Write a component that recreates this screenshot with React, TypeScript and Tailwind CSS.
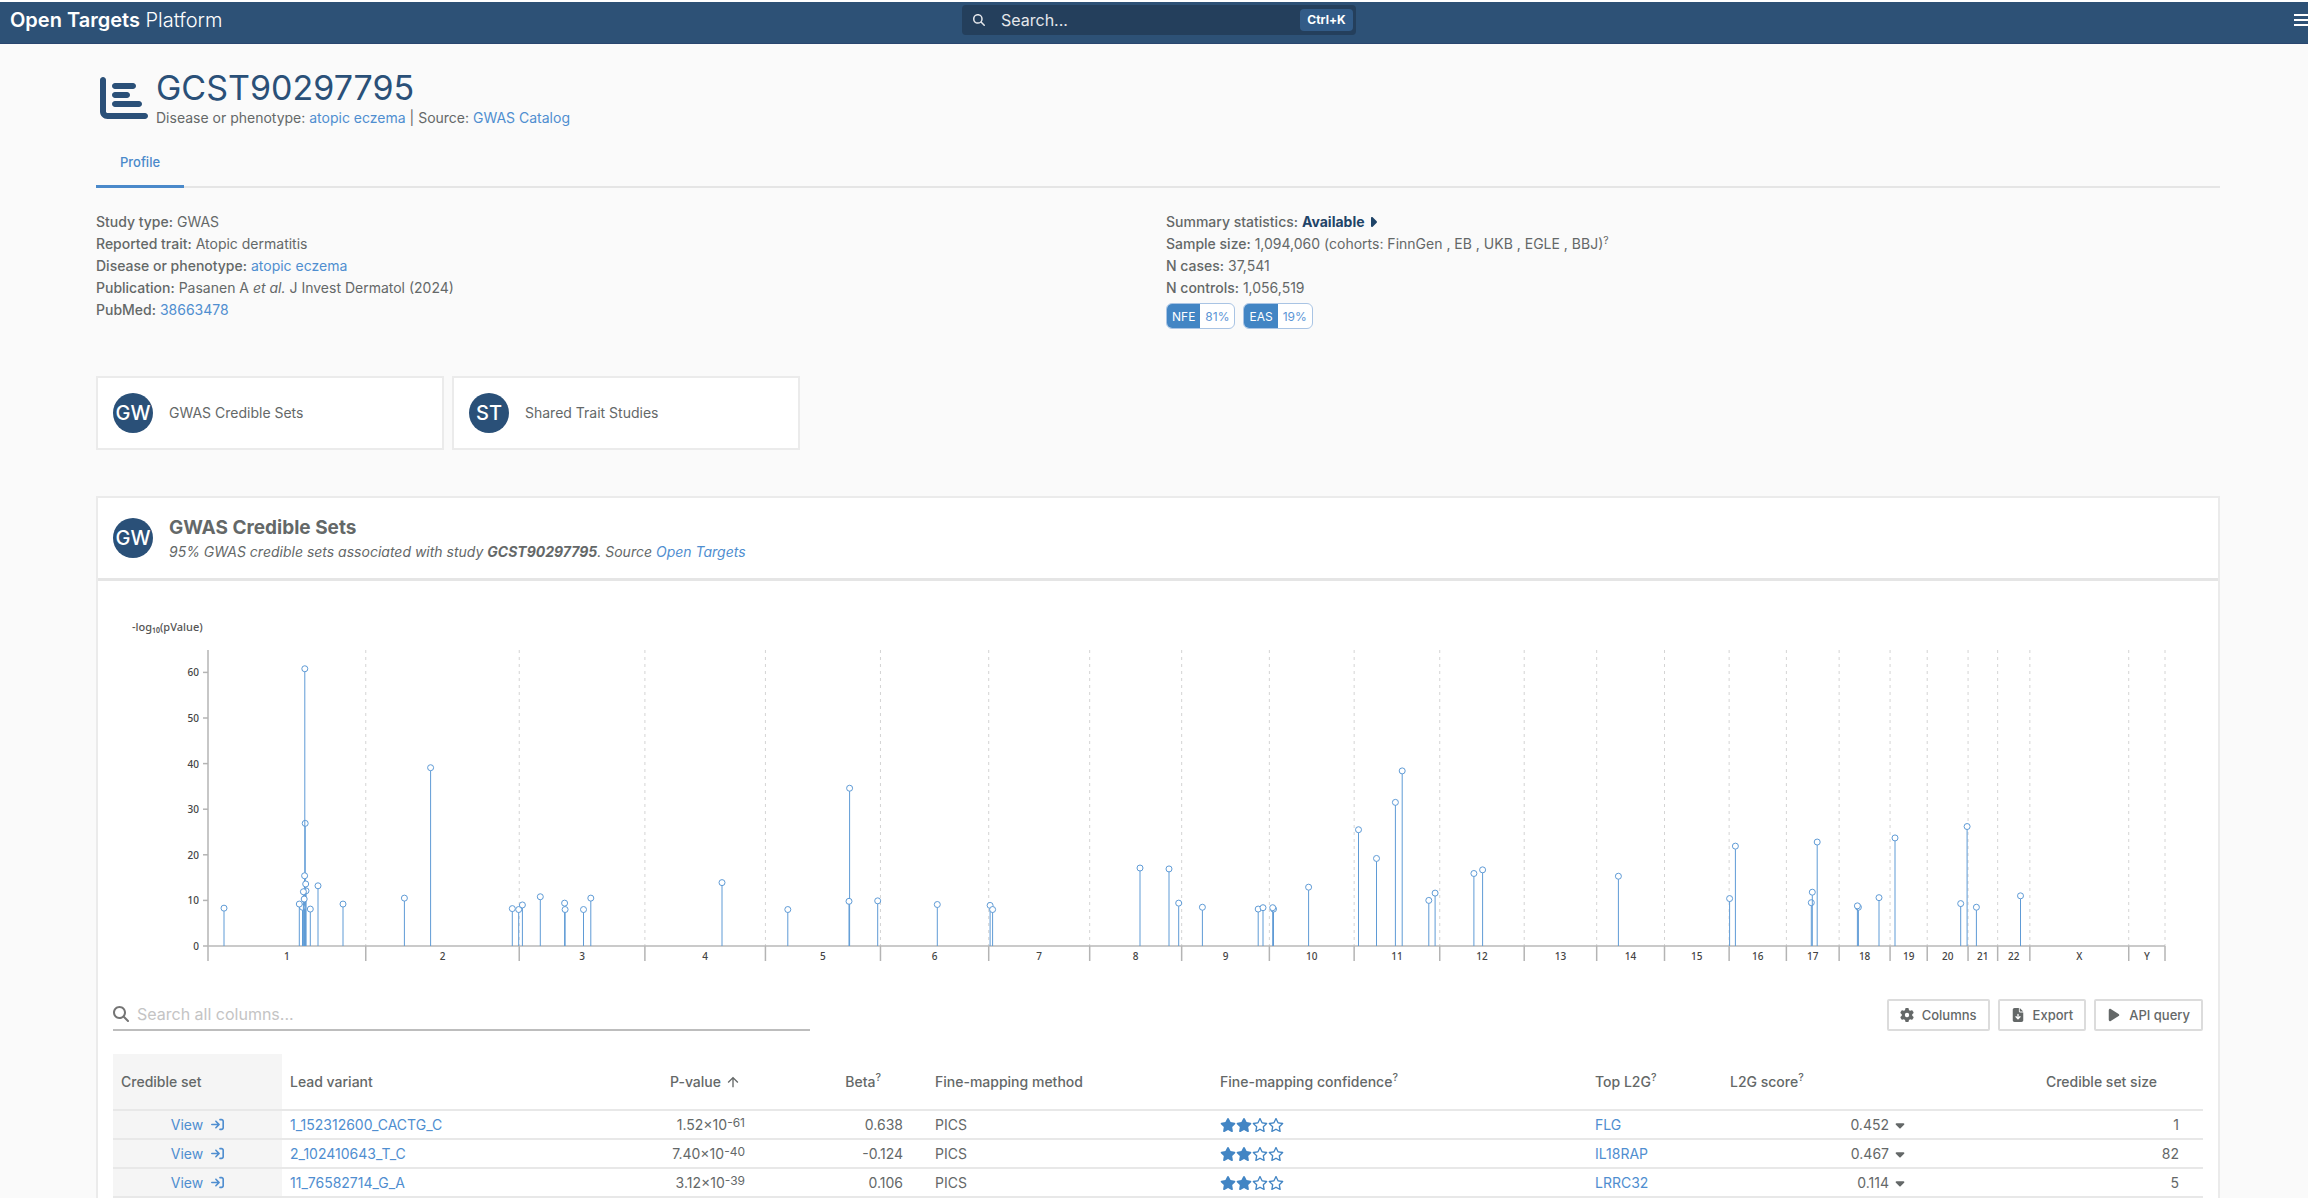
import { ReactNode } from 'react';
import {
  FaArrowRightToBracket,
  FaCaretDown,
  FaCaretRight,
  FaChartBar,
  FaFileArrowDown,
  FaGear,
  FaMagnifyingGlass,
  FaPlay,
  FaRegStar,
  FaStar,
} from 'react-icons/fa6';
import { MdArrowUpward, MdMenu } from 'react-icons/md';

interface CredibleSet {
  variant: string;
  mantissa: string;
  exponent: string;
  beta: string;
  gene: string;
  score: string;
  size: number;
}

const credibleSets: CredibleSet[] = [
  { variant: '1_152312600_CACTG_C', mantissa: '1.52', exponent: '-61', beta: '0.638', gene: 'FLG', score: '0.452', size: 1 },
  { variant: '2_102410643_T_C', mantissa: '7.40', exponent: '-40', beta: '-0.124', gene: 'IL18RAP', score: '0.467', size: 82 },
  { variant: '11_76582714_G_A', mantissa: '3.12', exponent: '-39', beta: '0.106', gene: 'LRRC32', score: '0.114', size: 5 },
];

// chromosome name and length in megabases
const chromosomes: [string, number][] = [
  ['1', 248.96], ['2', 242.19], ['3', 198.3], ['4', 190.21], ['5', 181.54], ['6', 170.81],
  ['7', 159.35], ['8', 145.14], ['9', 138.39], ['10', 133.8], ['11', 135.09], ['12', 133.28],
  ['13', 114.36], ['14', 107.04], ['15', 101.99], ['16', 90.34], ['17', 83.26], ['18', 80.37],
  ['19', 58.62], ['20', 64.44], ['21', 46.71], ['22', 50.82], ['X', 156.04], ['Y', 57.23],
];

// distance along the genome axis, -log10(pValue)
const points: [number, number][] = [
  [16, 8.3], [97.2, 26.9], [96.8, 60.8], [96.6, 15.4], [98, 12.1], [97.7, 13.6], [94.5, 8.5],
  [95.4, 11.9], [96.2, 10.3], [91.3, 9.2], [102.3, 8.1], [110, 13.2], [135, 9.2], [196.4, 10.5],
  [222.6, 39.1], [304.3, 8.2], [310.7, 8], [314.4, 9], [332.3, 10.8], [356.6, 9.4], [357.1, 8],
  [375.5, 8], [382.8, 10.5], [514, 13.9], [579.8, 8], [641.6, 34.6], [641, 9.8], [669.7, 9.9],
  [729.3, 9.1], [782.1, 8.9], [784.6, 8], [932, 17.1], [961, 16.9], [970.7, 9.4], [994.4, 8.5],
  [1050.2, 8.1], [1055, 8.4], [1065.5, 8.1], [1064.7, 8.4], [1100.6, 12.9], [1150.5, 25.5],
  [1168.5, 19.2], [1187.4, 31.5], [1194.2, 38.4], [1220.8, 10], [1227.1, 11.6], [1265.9, 15.9],
  [1274.6, 16.7], [1410.4, 15.3], [1521.6, 10.4], [1527.4, 21.9], [1603.3, 9.5], [1604.3, 11.8],
  [1609.2, 22.8], [1650.4, 8.5], [1649.4, 8.8], [1671, 10.6], [1687, 23.7], [1752.7, 9.3],
  [1759.1, 26.2], [1768.4, 8.5], [1812.5, 11],
];

const Anchor: React.FC<{ children: ReactNode }> = ({ children }) => (
  <a href="#" className="text-[#4f8ed0] hover:underline">
    {children}
  </a>
);

const Badge: React.FC<{ label: string }> = ({ label }) => (
  <div className="flex size-10 shrink-0 items-center justify-center rounded-full bg-[#2a5078] text-xl font-medium text-white">
    {label}
  </div>
);

const Header: React.FC = () => (
  <header className="flex h-11 items-center border-t-2 border-b border-t-white border-b-[#29466f] bg-[#2d5176] pb-[5px] pl-[6px] text-white">
    <a href="#" className="flex-1 pl-1 text-xl">
      <span className="font-semibold">Open Targets</span> <span className="font-light">Platform</span>
    </a>
    <button className="flex h-[30px] w-[394px] items-center rounded bg-[#243f5c] pr-[3px] pl-[11px]">
      <FaMagnifyingGlass className="size-3 text-gray-200" />
      <span className="ml-4 flex-1 text-left text-base text-gray-200">Search...</span>
      <span className="flex h-[22px] w-[53px] items-center justify-center rounded bg-[#325b87] text-xs font-bold">
        Ctrl+K
      </span>
    </button>
    <div className="flex flex-1 justify-end overflow-hidden">
      <button aria-label="Menu" className="-mr-[7px]">
        <MdMenu className="size-6" />
      </button>
    </div>
  </header>
);

const Field: React.FC<{ label: string; children: ReactNode }> = ({ label, children }) => (
  <div className="leading-[22px]">
    <span className="font-medium">{label}:</span> {children}
  </div>
);

const Ancestry: React.FC<{ code: string; share: string }> = ({ code, share }) => (
  <div className="flex h-[26px] overflow-hidden rounded-md border border-[#a9c4e4] bg-white text-xs leading-[25px]">
    <span className="bg-[#4285c4] px-[5px] text-white">{code}</span>
    <span className="px-[5px] text-[#5b95d5]">{share}</span>
  </div>
);

const Summary: React.FC = () => (
  <div className="mt-[23px] grid grid-cols-2 gap-4">
    <div>
      <Field label="Study type">GWAS</Field>
      <Field label="Reported trait">Atopic dermatitis</Field>
      <Field label="Disease or phenotype">
        <Anchor>atopic eczema</Anchor>
      </Field>
      <Field label="Publication">
        Pasanen A <i>et al.</i> J Invest Dermatol (2024)
      </Field>
      <Field label="PubMed">
        <Anchor>38663478</Anchor>
      </Field>
    </div>
    <div>
      <Field label="Summary statistics">
        <button className="font-bold text-[#1f4468]">
          Available
          <FaCaretRight className="inline h-4 w-auto align-[-3px]" />
        </button>
      </Field>
      <Field label="Sample size">
        1,094,060 (cohorts: FinnGen , EB , UKB , EGLE , BBJ)<sup>?</sup>
      </Field>
      <Field label="N cases">37,541</Field>
      <Field label="N controls">1,056,519</Field>
      <div className="mt-1 flex gap-2">
        <Ancestry code="NFE" share="81%" />
        <Ancestry code="EAS" share="19%" />
      </div>
    </div>
  </div>
);

const SectionCard: React.FC<{ short: string; title: string }> = ({ short, title }) => (
  <a
    href="#"
    className="flex h-[74px] w-[348px] items-center gap-4 border-2 border-[#ebebeb] bg-white px-[15px]"
  >
    <Badge label={short} />
    {title}
  </a>
);

const ManhattanPlot: React.FC = () => {
  const left = 110;
  const top = 34;
  const bottom = 330;
  const plotWidth = 1957;
  const total = chromosomes.reduce((sum, [, length]) => sum + length, 0);
  const y = (value: number) => bottom - value * 4.56;

  let offset = left;
  const bands = chromosomes.map(([name, length]) => {
    const start = offset;
    offset += (length / total) * plotWidth;
    return { name, start, end: offset };
  });

  return (
    <svg
      viewBox="0 0 2120 360"
      className="mt-[35px] w-full font-['Noto_Sans',sans-serif] text-[10px] font-medium"
      role="img"
      aria-label="Manhattan plot"
    >
      <text x={34} y={15} fill="#555" className="text-[11px]">
        -log₁₀(pValue)
      </text>

      {/* y axis */}
      <path d={`M${left} ${top}V${bottom + 15}`} stroke="#b4b4b4" strokeWidth={1.5} />
      {[0, 10, 20, 30, 40, 50, 60].map((tick) => (
        <g key={tick}>
          <path d={`M${left - 5} ${y(tick)}H${left}`} stroke="#b4b4b4" strokeWidth={1.5} />
          <text x={left - 9} y={y(tick) + 4} textAnchor="end" fill="#444">
            {tick}
          </text>
        </g>
      ))}

      {/* chromosomes */}
      {bands.map(({ name, start, end }) => (
        <g key={name}>
          <path d={`M${end} ${top}V${bottom}`} stroke="#d4d4d4" strokeDasharray="3 4" />
          <path d={`M${end} ${bottom}V${bottom + 15}`} stroke="#b4b4b4" strokeWidth={1.5} />
          <text x={(start + end) / 2} y={bottom + 14} textAnchor="middle" fill="#444">
            {name}
          </text>
        </g>
      ))}
      <path d={`M${left} ${bottom}H${left + plotWidth}`} stroke="#b9b9b9" strokeWidth={1.5} />

      {points.map(([x, value], i) => (
        <g key={i} stroke="#5f9bd6">
          <path d={`M${left + x} ${bottom}V${y(value)}`} />
          <circle cx={left + x} cy={y(value)} r={3} fill="white" />
        </g>
      ))}
    </svg>
  );
};

const ToolButton: React.FC<{ icon: ReactNode; label: string }> = ({ icon, label }) => (
  <button className="flex h-8 items-center gap-2 rounded-xs border-2 border-[#dcdcdc] px-[11px] text-[13px] font-medium">
    {icon}
    {label}
  </button>
);

const Toolbar: React.FC = () => (
  <div className="mt-[23px] flex items-center justify-between">
    <label className="flex h-8 w-1/3 items-center gap-2 border-b-2 border-[#bdbdbd]">
      <FaMagnifyingGlass className="size-4 text-[#757575]" />
      <input
        type="text"
        aria-label="Search all columns"
        placeholder="Search all columns..."
        className="flex-1 text-base outline-none placeholder:text-[#c4c4c4]"
      />
    </label>
    <div className="flex gap-2">
      <ToolButton icon={<FaGear className="h-[14px] w-auto" />} label="Columns" />
      <ToolButton icon={<FaFileArrowDown className="h-[14px] w-auto" />} label="Export" />
      <ToolButton icon={<FaPlay className="h-[14px] w-auto" />} label="API query" />
    </div>
  </div>
);

const CredibleSetsTable: React.FC = () => (
  <table className="mt-[23px] w-full table-fixed text-left">
    <colgroup>
      <col className="w-[169px]" />
      <col className="w-[318px]" />
      <col className="w-[169px]" />
      <col className="w-[158px]" />
      <col className="w-[285px]" />
      <col className="w-[375px]" />
      <col className="w-[135px]" />
      <col className="w-[209px]" />
      <col />
    </colgroup>
    <thead>
      <tr className="h-14 border-b-2 border-[#e8e8e8] *:px-2 *:font-medium">
        <th className="bg-[#f5f5f5]">Credible set</th>
        <th>Lead variant</th>
        <th>
          <div className="flex items-center justify-end gap-1 pr-5">
            P-value <MdArrowUpward className="size-4" />
          </div>
        </th>
        <th>
          <div className="pr-[38px] text-right">
            Beta<sup>?</sup>
          </div>
        </th>
        <th>Fine-mapping method</th>
        <th>
          Fine-mapping confidence<sup>?</sup>
        </th>
        <th>
          Top L2G<sup>?</sup>
        </th>
        <th>
          L2G score<sup>?</sup>
        </th>
        <th>
          <div className="pr-[38px] text-right">Credible set size</div>
        </th>
      </tr>
    </thead>
    <tbody>
      {credibleSets.map((row) => (
        <tr key={row.variant} className="h-[29px] border-b-2 border-[#e8e8e8] *:px-2">
          <td className="bg-[#f5f5f5] text-center">
            <Anchor>
              View <FaArrowRightToBracket className="ml-1 inline size-[13px] align-[-1px]" />
            </Anchor>
          </td>
          <td>
            <Anchor>{row.variant}</Anchor>
          </td>
          <td>
            <div className="pr-4 text-right">
              {row.mantissa}×10<sup className="-top-[3px] text-xs leading-none">{row.exponent}</sup>
            </div>
          </td>
          <td>
            <div className="pr-4 text-right">{row.beta}</div>
          </td>
          <td>PICS</td>
          <td>
            <div className="flex text-[#4285c4]">
              <FaStar className="size-4" />
              <FaStar className="size-4" />
              <FaRegStar className="size-4" />
              <FaRegStar className="size-4" />
            </div>
          </td>
          <td>
            <Anchor>{row.gene}</Anchor>
          </td>
          <td>
            <div className="flex items-center justify-end gap-1 pr-4">
              {row.score}
              <FaCaretDown className="h-[14px] w-auto" />
            </div>
          </td>
          <td>
            <div className="pr-4 text-right">{row.size}</div>
          </td>
        </tr>
      ))}
    </tbody>
  </table>
);

const App: React.FC = () => {
  return (
    <div className="bg-[#fafafa] font-['Inter',sans-serif] text-sm text-[#646868]">
      <Header />

      <main className="pt-6 pr-[88px] pl-24">
        <div className="flex gap-2">
          <FaChartBar className="mt-[6px] ml-1 size-12 text-[#2a5078]" />
          <div>
            <h1 className="text-[34px] leading-10 text-[#2a5078]">GCST90297795</h1>
            <p className="leading-5">
              Disease or phenotype: <Anchor>atopic eczema</Anchor> | Source: <Anchor>GWAS Catalog</Anchor>
            </p>
          </div>
        </div>

        <nav className="mt-3 flex border-b-2 border-[#e5e5e5]">
          <a
            href="#"
            className="-mb-[2px] flex h-12 w-[88px] items-center justify-center border-b-3 border-[#4a89ca] text-[13px] font-medium text-[#4a89ca]"
          >
            Profile
          </a>
        </nav>

        <Summary />

        <div className="mt-[47px] flex gap-2">
          <SectionCard short="GW" title="GWAS Credible Sets" />
          <SectionCard short="ST" title="Shared Trait Studies" />
        </div>

        <section className="mt-[46px] border-x-2 border-t-2 border-[#ebebeb] bg-white">
          <div className="flex h-[83px] items-center gap-4 border-b-3 border-[#e5e5e5] px-[15px]">
            <Badge label="GW" />
            <div>
              <h2 className="text-[19px] leading-7 font-bold">GWAS Credible Sets</h2>
              <p className="leading-5 italic">
                95% GWAS credible sets associated with study <b>GCST90297795</b>. Source{' '}
                <Anchor>Open Targets</Anchor>
              </p>
            </div>
          </div>
          <ManhattanPlot />
          <div className="px-[15px]">
            <Toolbar />
            <CredibleSetsTable />
          </div>
        </section>
      </main>
    </div>
  );
};

export default App;
